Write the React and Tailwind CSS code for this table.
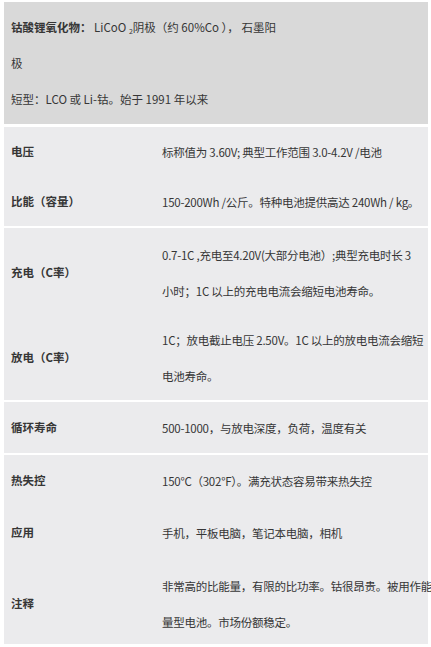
export default function App() {
  const font = { fontFamily: '"Noto Sans CJK SC", "Noto Sans", sans-serif' };
  const Row = ({ label, lines, h }) => (
    <div className={`flex items-center ${h}`}>
      <div className="w-[158px] pl-[7px] font-bold shrink-0">{label}</div>
      <div className="flex-1 pr-[2px] tracking-[-0.25px]">
        {lines.map((l, i) => (
          <div key={i} className="leading-[36px] whitespace-nowrap">{l}</div>
        ))}
      </div>
    </div>
  );
  return (
    <div className="w-[431px] h-[647px] bg-white overflow-hidden text-[11.5px] text-[#363636]" style={font}>
      <div className="ml-[4px] mt-[2px] w-[424px] flex flex-col">
        <div className="bg-[#d9d9d9] h-[122px] pl-[7px] pt-[7px]">
          <div className="leading-[36px]"><span className="font-bold">钴酸锂氧化物：</span> LiCoO <sub className="text-[7px]">2</sub>阴极（约 60%Co ）， 石墨阳</div>
          <div className="leading-[36px]">极</div>
          <div className="leading-[36px]">短型：LCO 或 Li-钴。始于 1991 年以来</div>
        </div>
        <div className="h-[3px] bg-white" />
        <div className="bg-[#ebebed]">
          <Row label="电压" lines={["标称值为 3.60V; 典型工作范围 3.0-4.2V /电池"]} h="h-[50px]" />
          <Row label="比能（容量）" lines={["150-200Wh /公斤。特种电池提供高达 240Wh / kg。"]} h="h-[49px]" />
        </div>
        <div className="h-[2px] bg-white" />
        <div className="bg-[#ebebed]">
          <Row label="充电（C率）" lines={["0.7-1C ,充电至4.20V(大部分电池）;典型充电时长 3", "小时；1C 以上的充电电流会缩短电池寿命。"]} h="h-[86px] pt-[4px]" />
          <Row label="放电（C率）" lines={["1C；放电截止电压 2.50V。1C 以上的放电电流会缩短", "电池寿命。"]} h="h-[86px] pt-[2px]" />
        </div>
        <div className="h-[2px] bg-white" />
        <div className="bg-[#ebebed]">
          <Row label="循环寿命" lines={["500-1000，与放电深度，负荷，温度有关"]} h="h-[51px]" />
        </div>
        <div className="h-[2px] bg-white" />
        <div className="bg-[#ebebed]">
          <Row label="热失控" lines={["150°C（302°F）。满充状态容易带来热失控"]} h="h-[52px]" />
          <Row label="应用" lines={["手机，平板电脑，笔记本电脑，相机"]} h="h-[51px]" />
          <Row label="注释" lines={["非常高的比能量，有限的比功率。钴很昂贵。被用作能", "量型电池。市场份额稳定。"]} h="h-[86px] pt-[6px]" />
        </div>
      </div>
    </div>
  );
}
